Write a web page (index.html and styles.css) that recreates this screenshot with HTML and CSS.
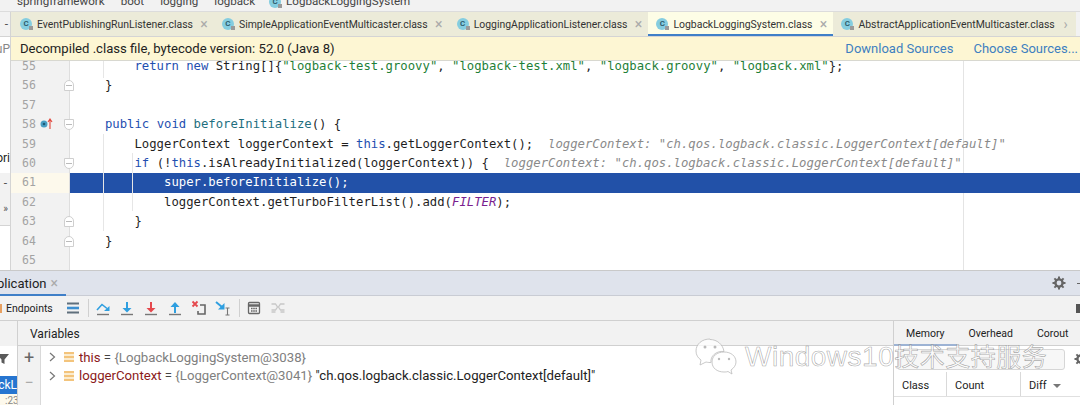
FILE: index.html
```html
<!DOCTYPE html>
<html>

<head>
    <meta charset="utf-8">
    <link rel="stylesheet" href="styles.css">
</head>

<body>
    <div class="App">
        <div class="Crumbs">
            <span class="CrumbText">springframework</span><i class="Sep"></i>
            <span class="CrumbText">boot</span><i class="Sep"></i>
            <span class="CrumbText">logging</span><i class="Sep"></i>
            <span class="CrumbText">logback</span><i class="Sep"></i>
            <span class="Cls"></span><span class="CrumbText">LogbackLoggingSystem</span>
        </div>

        <div class="Main">
            <div class="Side">
                <div class="SideTop">-</div>
                <div class="SideA">uP</div>
                <div class="SideB">ori</div>
                <div class="SideC">-</div>
                <div class="SideD">&raquo;</div>
            </div>

            <div class="Center">
                <div class="Tabs">
                    <div class="Tab"><span class="Cls"></span><span>EventPublishingRunListener.class</span><b class="Close">&times;</b></div>
                    <div class="Tab"><span class="Cls"></span><span>SimpleApplicationEventMulticaster.class</span><b class="Close">&times;</b></div>
                    <div class="Tab"><span class="Cls"></span><span>LoggingApplicationListener.class</span><b class="Close">&times;</b></div>
                    <div class="Tab Active"><span class="Cls"></span><span>LogbackLoggingSystem.class</span><b class="Close">&times;</b></div>
                    <div class="Tab"><span class="Cls"></span><span>AbstractApplicationEventMulticaster.class</span><b class="Close">&rsaquo;</b></div>
                    <div class="TabMore">&#711;</div>
                </div>

                <div class="Banner">
                    <span class="BannerText">Decompiled .class file, bytecode version: 52.0 (Java 8)</span>
                    <a class="BannerLink">Download Sources</a>
                    <a class="BannerLink">Choose Sources...</a>
                </div>

                <div class="Editor">
                    <div class="Margin"></div>
                    <div class="Guide G0"></div>
                    <div class="Guide G1"></div>
                    <div class="Guide G2"></div>
                    <div class="Lines">
                        <div class="Line"><div class="Gut"><span class="Num">55</span></div><pre class="Code">        <k>return new</k> String[]{<s>"logback-test.groovy"</s>, <s>"logback-test.xml"</s>, <s>"logback.groovy"</s>, <s>"logback.xml"</s>};</pre></div>
                        <div class="Line"><div class="Gut"><span class="Num">56</span><i class="Fold Up"></i></div><pre class="Code">    }</pre></div>
                        <div class="Line"><div class="Gut"><span class="Num">57</span></div><pre class="Code"></pre></div>
                        <div class="Line"><div class="Gut"><span class="Num">58</span>
                            <svg class="Mark" width="13" height="12" viewBox="0 0 13 12"><circle cx="4" cy="6" r="3.5" fill="#4a9fc4"/><circle cx="4" cy="6" r="1.3" fill="#1d5a78"/><path d="M10 11V2M8 4l2-3 2 3" fill="none" stroke="#e2483d" stroke-width="1.1"/></svg>
                            <i class="Fold Down"></i></div><pre class="Code">    <k>public void</k> <m>beforeInitialize</m>() {</pre></div>
                        <div class="Line"><div class="Gut"><span class="Num">59</span></div><pre class="Code">        LoggerContext loggerContext = <k>this</k>.getLoggerContext();  <em>loggerContext: "ch.qos.logback.classic.LoggerContext[default]"</em></pre></div>
                        <div class="Line"><div class="Gut"><span class="Num">60</span><i class="Fold Down"></i></div><pre class="Code">        <k>if</k> (!<k>this</k>.isAlreadyInitialized(loggerContext)) {  <em>loggerContext: "ch.qos.logback.classic.LoggerContext[default]"</em></pre></div>
                        <div class="Line Cur"><div class="Gut"><span class="Num">61</span></div><pre class="Code">            super.beforeInitialize();</pre></div>
                        <div class="Line"><div class="Gut"><span class="Num">62</span></div><pre class="Code">            loggerContext.getTurboFilterList().add(<u>FILTER</u>);</pre></div>
                        <div class="Line"><div class="Gut"><span class="Num">63</span><i class="Fold Up"></i></div><pre class="Code">        }</pre></div>
                        <div class="Line"><div class="Gut"><span class="Num">64</span><i class="Fold Up"></i></div><pre class="Code">    }</pre></div>
                        <div class="Line"><div class="Gut"><span class="Num">65</span></div><pre class="Code"></pre></div>
                    </div>
                </div>
            </div>
        </div>

        <div class="Debug">
            <div class="DebugTitle">
                <div class="DebugTab"><span>Application</span><b class="Close">&times;</b></div>
                <svg class="Gear" width="14" height="14" viewBox="0 0 14 14"><use href="#gear"/></svg>
                <span class="Minus"></span>
            </div>

            <div class="DebugBar">
                <span class="EndIco"></span><span class="EndText">Endpoints</span>
                <svg class="Tool Menu" width="13" height="12" viewBox="0 0 13 12"><path d="M0 1.5h12M0 10.5h12" stroke="#5f6f7c" stroke-width="2"/><path d="M0 6h12" stroke="#3d8fd0" stroke-width="2.600"/></svg>
                <i class="VSep"></i>
                <svg class="Tool" width="16" height="16" viewBox="0 0 16 16"><path d="M2 14.500h12" stroke="#777" stroke-width="1.400"/><path d="M2 10l5-5.500 5 4" fill="none" stroke="#2f9fe0" stroke-width="1.600"/><path d="M9 11h5.500V6z" fill="#2f9fe0"/></svg>
                <svg class="Tool" width="16" height="16" viewBox="0 0 16 16"><use href="#down"/><path d="M8 2v8" stroke="#2f9fe0" stroke-width="2"/><path d="M3.500 8h9L8 12.500z" fill="#2f9fe0"/></svg>
                <svg class="Tool" width="16" height="16" viewBox="0 0 16 16"><use href="#down"/><path d="M8 2v8" stroke="#e5484d" stroke-width="2"/><path d="M3.500 8h9L8 12.500z" fill="#e5484d"/></svg>
                <svg class="Tool" width="16" height="16" viewBox="0 0 16 16"><use href="#down"/><path d="M8 5v8" stroke="#2f9fe0" stroke-width="2"/><path d="M3.500 7h9L8 2z" fill="#2f9fe0"/></svg>
                <svg class="Tool" width="16" height="16" viewBox="0 0 16 16"><path d="M1.500 1.500l5 5M6.500 1.500l-5 5" stroke="#e5484d" stroke-width="1.800"/><path d="M9 5h5v9H7v-3" fill="none" stroke="#666" stroke-width="1.600"/></svg>
                <svg class="Tool" width="16" height="16" viewBox="0 0 16 16"><path d="M1 2l6 5" stroke="#2f9fe0" stroke-width="2"/><path d="M9.500 3v6.500H3z" fill="#2f9fe0"/><path d="M10.500 8h4M12.500 8v7M10.500 15h4" fill="none" stroke="#777" stroke-width="1.100"/></svg>
                <i class="VSep"></i>
                <svg class="Tool" width="16" height="16" viewBox="0 0 16 16"><rect x="2.500" y="2.500" width="11" height="11" rx="1" fill="none" stroke="#666" stroke-width="1.300"/><path d="M2.500 5.500h11" stroke="#666" stroke-width="2.500"/><path d="M5 8.500h6M5 11h6" stroke="#666" stroke-width="1.400" stroke-dasharray="1.600 .6"/></svg>
                <svg class="Tool" width="16" height="16" viewBox="0 0 16 16"><path d="M1.500 4h4l2 3-2 3h-4M1.500 12h4M14.500 4h-4l-2 3 2 3h4M10.500 12h4" fill="none" stroke="#c8c8c8" stroke-width="1.300"/></svg>
                <span class="Grow"></span>
                <span class="DotsIco"></span>
            </div>

            <div class="DebugBody">
                <div class="Frames">
                    <div class="FramesHead"></div>
                    <svg class="Filter" width="12" height="12" viewBox="0 0 12 12"><path d="M0 1h12L7.500 6.500V11l-3-1.500v-3z" fill="#5a5a5a"/></svg>
                    <div class="FrameSel">ckL</div>
                    <div class="FrameOther">:23</div>
                </div>

                <div class="Vars">
                    <div class="VarsHead">Variables</div>
                    <div class="VarsBody">
                        <div class="VarTools">
                            <span class="Plus">+</span>
                            <span class="Dash">&minus;</span>
                        </div>
                        <div class="VarList">
                            <div class="Var"><svg class="Arrow" width="7" height="10" viewBox="0 0 7 10"><path d="M1 1l4.500 4L1 9" fill="none" stroke="#777" stroke-width="1.200"/></svg><i class="VarIco"></i><span class="Name">this</span><span class="Eq"> = </span><span class="Val">{LogbackLoggingSystem@3038}</span></div>
                            <div class="Var"><svg class="Arrow" width="7" height="10" viewBox="0 0 7 10"><path d="M1 1l4.500 4L1 9" fill="none" stroke="#777" stroke-width="1.200"/></svg><i class="VarIco"></i><span class="Name">loggerContext</span><span class="Eq"> = </span><span class="Val">{LoggerContext@3041}</span><span class="Str"> "ch.qos.logback.classic.LoggerContext[default]"</span></div>
                        </div>
                    </div>
                </div>

                <div class="Memory">
                    <div class="MemTabs">
                        <span class="MemTab On">Memory</span>
                        <span class="MemTab">Overhead</span>
                        <span class="MemTab">Corout</span>
                        <span class="MemArrow"></span>
                    </div>
                    <div class="MemSearch">
                        <div class="SearchBox"></div>
                        <svg class="Gear" width="14" height="14" viewBox="0 0 14 14"><use href="#gear"/></svg>
                    </div>
                    <div class="MemCols">
                        <span class="ColA">Class</span>
                        <span class="ColB">Count</span>
                        <span class="ColC">Diff <i class="Caret"></i></span>
                    </div>
                </div>
            </div>
        </div>

        <div class="Watermark">
            <svg width="44" height="40" viewBox="0 0 44 40"><path d="M16 2C8 2 2 7 2 14c0 4 2 7 5 9l-1 5 6-3c2 .5 4 .6 5 .5-1-6 5-12 13-11-1-7-7-12-14-12z" fill="rgba(255,255,255,.75)" stroke="#bbb" stroke-width=".8"/><path d="M30 15c-7 0-12 4-12 10s5 10 12 10c1.500 0 3 0 4-.5l4 2.500-1-4c3-2 5-5 5-8 0-6-5-10-12-10z" fill="rgba(255,255,255,.75)" stroke="#bbb" stroke-width=".8"/><circle cx="11" cy="10" r="1.500" fill="#bbb"/><circle cx="21" cy="10" r="1.500" fill="#bbb"/><circle cx="25" cy="22" r="1.200" fill="#bbb"/><circle cx="35" cy="22" r="1.200" fill="#bbb"/></svg>
            <span class="WmText">Windows10<span class="WmCjk">技术支持服务</span></span>
        </div>
    </div>

    <svg class="Defs" width="0" height="0">
        <defs>
            <path id="down" d="M2 14.500h12" stroke="#777" stroke-width="1.400"/>
            <g id="gear">
                <circle cx="7" cy="7" r="3.600" fill="none" stroke="#666" stroke-width="2.400"/>
                <path d="M7 .5v3M7 10.500v3M.5 7h3M10.500 7h3M2.400 2.400l2 2M9.600 9.600l2 2M11.600 2.400l-2 2M4.400 9.600l-2 2" stroke="#666" stroke-width="2"/>
            </g>
        </defs>
    </svg>
</body>

</html>
```

FILE: styles.css
```css
* {
    box-sizing: border-box;
}

body {
    margin: 0;
    background-color: white;
    overflow: hidden;
    font-family: "Roboto", "Liberation Sans", sans-serif;
    color: #222;
}

.Defs {
    position: absolute;
}

.App {
    position: relative;
    width: 1080px;
    height: 405px;
    display: flex;
    flex-direction: column;
    overflow: hidden;
}

/* breadcrumbs, cut by the top edge */
.Crumbs {
    height: 12px;
    flex: none;
    display: flex;
    align-items: flex-end;
    padding: 0 0 3px 17px;
    background-color: #f2f2f2;
    border-bottom: 1px solid #dcdcdc;
    font-size: 11.600px;
    line-height: 14px;
    color: #444;
    overflow: hidden;
}

.Sep {
    width: 16px;
}

.Crumbs .Cls {
    margin: 0 5px 0 -2px;
}

/* class icon */
.Cls {
    position: relative;
    flex: none;
    width: 12px;
    height: 12px;
    border-radius: 50%;
    background-color: #85cde0;
    color: #2c5a6a;
    font-size: 8px;
    font-weight: 600;
    line-height: 12px;
    text-align: center;
}

.Cls::before {
    content: "C";
}

.Cls::after {
    content: "";
    position: absolute;
    right: -1px;
    bottom: 0;
    width: 4px;
    height: 4px;
    background-color: #9a9a9a;
}

.Main {
    height: 258px;
    flex: none;
    display: flex;
}

/* project panel, only its last pixels show */
.Side {
    width: 11px;
    flex: none;
    display: flex;
    flex-direction: column;
    border-right: 1px solid #d4d4d4;
    font-size: 12px;
    color: #555;
    overflow: hidden;
}

.Side div {
    display: flex;
    justify-content: flex-end;
    align-items: center;
    white-space: nowrap;
}

.SideTop {
    height: 25px;
    background-color: #f2f2f2;
    padding-right: 2px;
    border-bottom: 1px solid #d4d4d4;
}

.SideA {
    height: 24px;
    color: #888;
}

.SideB {
    height: 112px;
    align-items: flex-end !important;
    color: #222;
    padding-bottom: 8px;
}

.SideC {
    height: 19px;
    background-color: #f2f2f2;
    padding-right: 3px;
}

.SideD {
    height: 34px;
    background-color: #f2f2f2;
    border-bottom: 1px solid #d4d4d4;
    padding-right: 2px;
    font-size: 10px;
}

.Center {
    flex: 1;
    min-width: 0;
    display: flex;
    flex-direction: column;
}

/* editor tabs */
.Tabs {
    height: 25px;
    flex: none;
    display: flex;
    padding-left: 1px;
    background-color: #ecebd9;
    border-bottom: 1px solid #d4d4d4;
    font-size: 10.450px;
    color: #333;
    white-space: nowrap;
}

.Tab {
    display: flex;
    align-items: center;
    gap: 5px;
    padding: 0 6px 0 8px;
}

.Tab.Active {
    background-color: #fdfde6;
    box-shadow: inset 0 -2px 0 #3f7fc8;
}

.Close {
    margin-left: 2px;
    width: 8px;
    font-size: 14px;
    font-weight: normal;
    color: #aaa;
    text-align: center;
}

.TabMore {
    flex: 1;
    background-color: #f2f2f2;
    color: #777;
    padding: 4px 0 0 8px;
}

/* decompiled notice */
.Banner {
    height: 24px;
    flex: none;
    display: flex;
    align-items: center;
    gap: 20px;
    padding: 0 2px 0 9px;
    background-color: #fdf6d3;
    border-bottom: 1px solid #d8d8d0;
    font-size: 13px;
}

.BannerText {
    flex: 1;
    font-size: 13.100px;
}

.BannerLink {
    color: #3d7fc0;
}

/* code */
.Editor {
    position: relative;
    flex: 1;
    overflow: hidden;
}

.Lines {
    margin-top: -4px;
}

.Line {
    position: relative;
    height: 19.400px;
    display: flex;
}

.Gut {
    position: relative;
    width: 59px;
    flex: none;
    background-color: #f2f2f2;
    border-right: 1px solid #dedede;
}

.Num {
    position: absolute;
    left: 11px;
    top: 0;
    font: 11.500px/19.400px "DejaVu Sans Mono", monospace;
    color: #a3a3a3;
}

.Mark {
    position: absolute;
    left: 29px;
    top: 3px;
}

.Fold {
    position: absolute;
    left: 53px;
    top: 4px;
    width: 10px;
    height: 11px;
    background-color: white;
    border: 1px solid #cfcfcf;
    z-index: 1;
}

.Fold::after {
    content: "";
    position: absolute;
    left: 1px;
    right: 1px;
    top: 4px;
    height: 1px;
    background-color: #bbb;
}

.Fold.Up {
    border-radius: 5px 5px 0 0;
}

.Fold.Down {
    border-radius: 0 0 5px 5px;
}

.Code {
    flex: 1;
    margin: 0;
    padding-left: 5.400px;
    font: 12.280px/19.400px "DejaVu Sans Mono", monospace;
    color: #1f1f1f;
    white-space: pre;
    overflow: hidden;
}

.Code k {
    color: #1f4fb0;
}

.Code s {
    text-decoration: none;
    color: #1f7f38;
}

.Code m {
    color: #1f6f7f;
}

.Code u {
    text-decoration: none;
    font-style: italic;
    color: #7a1f8f;
}

.Code em {
    color: #8a8a8a;
}

.Cur .Gut {
    background-color: #fdf9ec;
}

.Cur .Code {
    background-color: #2251a8;
    color: white;
}

.Margin {
    position: absolute;
    left: 952px;
    top: 0;
    bottom: 0;
    width: 1px;
    background-color: #e4e4e4;
}

.Cur {
    z-index: 1;
}

.Guide {
    position: absolute;
    width: 1px;
    background-color: #e6e6e6;
    z-index: 2;
}

.G0 {
    left: 92px;
    top: 0;
    height: 17px;
}

.G1 {
    left: 92px;
    top: 73px;
    height: 97px;
}

.G2 {
    left: 121px;
    top: 92px;
    height: 58px;
}

/* debug tool window */
.Debug {
    flex: 1;
    min-height: 0;
    display: flex;
    flex-direction: column;
    border-top: 1px solid #c9c9c9;
}

.DebugTitle {
    height: 25px;
    flex: none;
    display: flex;
    align-items: center;
    background-color: #dfe3ec;
    border-bottom: 1px solid #c9ccd4;
    font-size: 13px;
}

.DebugTab {
    width: 66px;
    height: 25px;
    display: flex;
    justify-content: flex-end;
    align-items: center;
    gap: 2px;
    padding-right: 8px;
    margin-right: auto;
    box-shadow: inset 0 -2px 0 #3f7fc8;
    white-space: nowrap;
    overflow: hidden;
}

.DebugTitle .Gear {
    margin-right: 11px;
}

.Minus {
    width: 8px;
    height: 1px;
    margin-right: -5px;
    background-color: #666;
}

.DebugBar {
    height: 25px;
    flex: none;
    display: flex;
    align-items: center;
    gap: 8px;
    background-color: #f2f2f2;
    border-bottom: 1px solid #d0d0d0;
    font-size: 10.500px;
}

.EndIco {
    width: 2px;
    height: 9px;
    background-color: #e8a060;
}

.EndText {
    margin-left: -4px;
    margin-right: 6px;
}

.VSep {
    width: 1px;
    height: 18px;
    margin-right: -2px;
    background-color: #d0d0d0;
}

.Grow {
    flex: 1;
}

.DotsIco {
    width: 4px;
    height: 9px;
    background-color: #555;
}

.DebugBody {
    flex: 1;
    min-height: 0;
    display: flex;
}

.Frames {
    width: 18px;
    flex: none;
    position: relative;
    border-right: 1px solid #d0d0d0;
    font-size: 12px;
    overflow: hidden;
}

.FramesHead {
    height: 25px;
    background-color: #f2f2f2;
}

.Filter {
    display: block;
    margin: 7px 0 0 -3px;
}

.FrameSel {
    margin-top: 11px;
    height: 18px;
    background-color: #2675d0;
    color: white;
    line-height: 18px;
    direction: rtl;
    padding-left: 1px;
}

.FrameOther {
    height: 12px;
    background-color: #fdf9ec;
    color: #888;
    font-size: 10px;
    line-height: 14px;
    padding-left: 5px;
}

.Vars {
    flex: 1;
    min-width: 0;
    display: flex;
    flex-direction: column;
}

.VarsHead {
    height: 25px;
    flex: none;
    padding-left: 12px;
    background-color: #f2f2f2;
    border-bottom: 1px solid #d0d0d0;
    font-size: 12px;
    line-height: 26px;
}

.VarsBody {
    flex: 1;
    display: flex;
}

.VarTools {
    width: 23px;
    flex: none;
    display: flex;
    flex-direction: column;
    align-items: center;
    background-color: #f2f2f2;
    border-right: 1px solid #d9d9d9;
    color: #666;
}

.Plus {
    height: 25px;
    font-size: 18px;
    line-height: 24px;
}

.Dash {
    font-size: 16px;
    line-height: 24px;
    color: #aaa;
}

.VarList {
    padding: 2px 0 0 8px;
    font-size: 13.200px;
}

.Var {
    height: 18.500px;
    display: flex;
    align-items: center;
    white-space: pre;
}

.Arrow {
    margin-right: 8px;
}

.VarIco {
    width: 10px;
    height: 10px;
    margin-right: 5px;
    background: repeating-linear-gradient(#f3c47c 0 2px, #fbeccf 2px 4px);
}

.Name {
    color: #8b1a1a;
}

.Eq {
    color: #444;
}

.Val {
    color: #808080;
}

.Str {
    color: #222;
}

.Memory {
    width: 187px;
    flex: none;
    display: flex;
    flex-direction: column;
    border-left: 1px solid #d0d0d0;
    font-size: 10.500px;
}

.MemTabs {
    height: 25px;
    flex: none;
    display: flex;
    align-items: center;
    background-color: #f2f2f2;
    border-bottom: 1px solid #d0d0d0;
}

.MemTab {
    height: 25px;
    padding: 0 12px;
    line-height: 26px;
}

.MemTab.On {
    box-shadow: inset 0 -2px 0 #9db3d4;
}

.MemSearch {
    height: 26px;
    flex: none;
    display: flex;
    align-items: center;
    gap: 9px;
    padding-left: 3px;
}

.SearchBox {
    width: 168px;
    height: 21px;
    flex: none;
    background-color: #f7f7f7;
    border: 1px solid #d6d6d6;
    border-radius: 3px;
}

.MemSearch .Gear {
    flex: none;
}

.MemCols {
    height: 25px;
    flex: none;
    display: flex;
    align-items: center;
    border-bottom: 1px solid #e0e0e0;
    font-size: 11px;
}

.MemCols span {
    height: 100%;
    line-height: 27px;
    padding-left: 8px;
    border-right: 1px solid #d9d9d9;
}

.ColA {
    width: 53px;
}

.ColB {
    width: 74px;
}

.MemCols .ColC {
    border-right: 0;
}

.Caret {
    display: inline-block;
    margin-left: 4px;
    border: 4px solid transparent;
    border-top: 4px solid #777;
    border-bottom: 0;
    vertical-align: middle;
}

/* image watermark sits over the debug panel */
.Watermark {
    position: absolute;
    left: 694px;
    top: 336px;
    display: flex;
    align-items: center;
    gap: 7px;
    pointer-events: none;
}

.WmText {
    font-family: "Liberation Sans", "Noto Sans CJK SC", sans-serif;
    font-size: 28px;
    line-height: 42px;
    letter-spacing: .5px;
    color: rgba(255, 255, 255, .6);
    -webkit-text-stroke: .6px rgba(120, 120, 120, .65);
    white-space: nowrap;
}

.WmCjk {
    font-size: 25px;
}
```
